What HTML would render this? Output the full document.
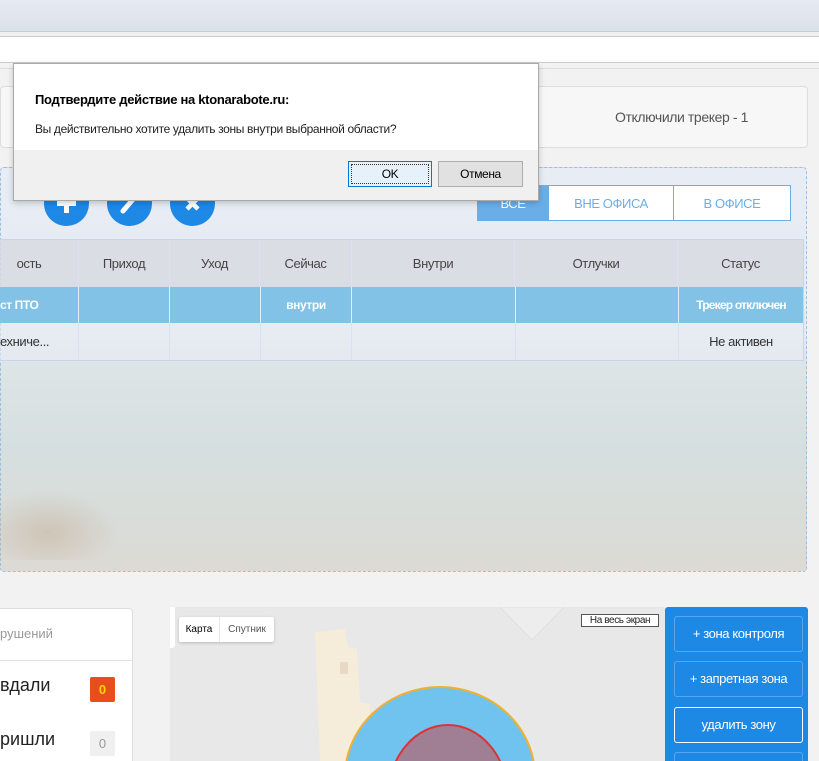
<!DOCTYPE html>
<html style="overflow:hidden;width:819px;height:761px"><head><meta charset="utf-8">
<style>
*{box-sizing:border-box;margin:0;padding:0}
body{width:819px;height:761px;overflow:hidden;position:relative;background:#f2f2f2;font-family:"Liberation Sans","DejaVu Sans",sans-serif;}
.abs{position:absolute}
.n{font-family:"Liberation Sans Narrow","Liberation Sans",sans-serif;letter-spacing:-0.4px}
.th{position:absolute;top:240px;height:47px;line-height:47px;text-align:center;font-size:13px;color:#444;border-right:1px solid #dde0f4}
.r1{position:absolute;top:287px;height:36px;line-height:36px;text-align:center;font-size:12px;color:#fff;font-weight:bold;border-right:1px solid #e3ecf8}
.r2{position:absolute;top:323px;height:37px;line-height:37px;text-align:center;font-size:13px;color:#333;border-right:1px solid #dde0f4}
.circ{position:absolute;top:181px;width:45px;height:45px;border-radius:50%;background:#1e88e5}
.tab{position:absolute;top:185px;height:36px;line-height:36px;text-align:center;font-size:13px;color:#6aaee8;border:1px solid #6aaee8;background:#fff}
.rb{position:absolute;left:674px;width:129px;height:36px;border:1px solid #5aa6ee;border-radius:3px;color:#fff;text-align:center;line-height:34px;font-size:13px}
</style></head><body>
<div class="abs" style="left:0;top:0;width:819px;height:31px;background:linear-gradient(#e6eaf1,#dbe1ea)"></div>
<div class="abs" style="left:0;top:31px;width:819px;height:5px;background:#f0f0f0;border-top:1px solid #c8ccd2"></div>
<div class="abs" style="left:0;top:36px;width:819px;height:27px;background:#fff;border-top:1px solid #ccc;border-bottom:1px solid #ccc"></div>
<div class="abs" style="left:0;top:68px;width:819px;height:1px;background:#ddd"></div>
<div class="abs" style="left:0;top:86px;width:808px;height:62px;background:#f7f7f7;border:1px solid #ddd;border-radius:4px"></div>
<div class="abs n" style="left:555px;top:86px;width:253px;height:62px;line-height:62px;text-align:center;font-size:14px;color:#555">Отключили трекер - 1</div>
<div class="abs" style="left:0;top:167px;width:807px;height:405px;border:1px dashed #9cc0e0;border-radius:4px;background:linear-gradient(180deg,#e8edf5 0%,#e6ebf2 40%,#dce4e6 50%,#d6dfdf 70%,#d9dcd8 90%,#dcdad4 100%)"></div>
<div class="abs" style="left:0;top:490px;width:120px;height:70px;background:radial-gradient(ellipse at 40% 60%,rgba(200,180,160,.6),rgba(220,215,210,0) 70%)"></div>
<div class="circ" style="left:44px"><svg width="45" height="45"><path d="M22.5 13v19M13 22.5h19" stroke="#fff" stroke-width="5"/></svg></div>
<div class="circ" style="left:107px"><svg width="45" height="45"><path d="M16 30l12-14" stroke="#fff" stroke-width="5" stroke-linecap="round"/></svg></div>
<div class="circ" style="left:170px"><svg width="45" height="45"><path d="M17 17l11 11M28 17l-11 11" stroke="#fff" stroke-width="4.5"/></svg></div>
<div class="tab n" style="left:477px;width:72px;background:#6aaee8;color:#fff">ВСЕ</div>
<div class="tab n" style="left:548px;width:126px">ВНЕ ОФИСА</div>
<div class="tab n" style="left:673px;width:118px">В ОФИСЕ</div>
<div class="abs" style="left:0;top:239px;width:804px;height:122px;border:1px solid #c9d4ec;border-left:none"></div>
<div class="abs" style="left:0;top:240px;width:803px;height:47px;background:rgba(215,218,224,.85)"></div>
<div class="abs" style="left:0;top:287px;width:803px;height:36px;background:#82c2e6"></div>
<div class="abs" style="left:0;top:323px;width:803px;height:37px;background:rgba(232,236,244,.6)"></div>
<div class="th n" style="left:-20px;width:99px">ость</div>
<div class="th n" style="left:79px;width:91px">Приход</div>
<div class="th n" style="left:170px;width:90px">Уход</div>
<div class="th n" style="left:260px;width:92px">Сейчас</div>
<div class="th n" style="left:352px;width:163px">Внутри</div>
<div class="th n" style="left:515px;width:163px">Отлучки</div>
<div class="th n" style="left:678px;width:125px;border:none">Статус</div>
<div class="r1 n" style="left:0;width:79px;text-align:left">ст ПТО</div>
<div class="r1" style="left:79px;width:91px"></div>
<div class="r1" style="left:170px;width:91px"></div>
<div class="r1 n" style="left:261px;width:91px">внутри</div>
<div class="r1" style="left:352px;width:164px"></div>
<div class="r1" style="left:516px;width:163px"></div>
<div class="r1 n" style="left:679px;width:124px;border:none;letter-spacing:-0.8px">Трекер отключен</div>
<div class="r2 n" style="left:0;width:79px;text-align:left">ехниче...</div>
<div class="r2" style="left:79px;width:91px"></div>
<div class="r2" style="left:170px;width:91px"></div>
<div class="r2" style="left:261px;width:91px"></div>
<div class="r2" style="left:352px;width:164px"></div>
<div class="r2" style="left:516px;width:163px"></div>
<div class="r2 n" style="left:679px;width:124px;border:none">Не активен</div>
<div class="abs" style="left:0;top:608px;width:133px;height:153px;overflow:hidden">
 <div class="abs" style="left:-5px;top:0;width:138px;height:170px;background:#fff;border:1px solid #ddd;border-radius:4px"></div>
 <div class="abs" style="left:0;top:52px;width:133px;height:1px;background:#e2e2e2"></div>
 <div class="abs" style="left:0;top:18px;font-size:13px;color:#999">рушений</div>
 <div class="abs" style="left:0;top:67px;font-size:18px;color:#222">вдали</div>
 <div class="abs" style="left:90px;top:69px;width:25px;height:25px;background:#e84e1b;border-radius:2px;color:#ffd600;font-weight:bold;font-size:13px;text-align:center;line-height:25px">0</div>
 <div class="abs" style="left:0;top:121px;font-size:18px;color:#222">ришли</div>
 <div class="abs" style="left:90px;top:123px;width:25px;height:25px;background:#f0f0f0;border-radius:2px;color:#999;font-size:13px;text-align:center;line-height:25px">0</div>
</div>
<div class="abs" style="left:170px;top:607px;width:495px;height:154px;background:#e8e8e8;overflow:hidden">
 <svg width="495" height="154" style="position:absolute;left:0;top:0">
  <polygon points="330,0 394,0 362,33" fill="#ededed" stroke="#e0e0e0"/>
  <polygon points="145,25 175,22 178,40 187,42 190,95 200,97 198,154 150,154" fill="#f5ecd9"/>
  <rect x="170" y="55" width="8" height="12" fill="#e8d8c4"/>
  <ellipse cx="270" cy="170" rx="95" ry="90" fill="#6fc3ee" stroke="#f0b030" stroke-width="2"/>
  <ellipse cx="278" cy="190" rx="60" ry="72" fill="#a07f95" stroke="#d33" stroke-width="2"/>
 </svg>
 <div class="abs" style="left:0;top:0;width:5px;height:41px;background:#fff;border-radius:0 0 3px 0"></div>
 <div class="abs" style="left:9px;top:10px;width:95px;height:25px;background:#fff;box-shadow:0 1px 3px rgba(0,0,0,.2);border-radius:2px;font-size:10px;line-height:25px">
  <span style="position:absolute;left:0;width:41px;text-align:center;color:#000;border-right:1px solid #e6e6e6">Карта</span>
  <span style="position:absolute;left:41px;width:54px;text-align:center;color:#555">Спутник</span>
 </div>
 <div class="abs n" style="left:411px;top:7px;width:78px;height:13px;border:1px solid #555;background:#fff;font-size:10px;line-height:11px;text-align:center;color:#222">На весь экран</div>
</div>
<div class="abs" style="left:665px;top:607px;width:143px;height:154px;background:#1e88e5;border-radius:3px 3px 0 0;overflow:hidden">
 <div class="rb n" style="left:9px;top:9px">+ зона контроля</div>
 <div class="rb n" style="left:9px;top:54px">+ запретная зона</div>
 <div class="rb n" style="left:9px;top:100px;border:1px solid #fff">удалить зону</div>
 <div class="rb" style="left:9px;top:145px"></div>
</div>
<div class="abs" style="left:13px;top:63px;width:526px;height:138px;background:#fff;border:1px solid #aaa;box-shadow:0 2px 6px rgba(0,0,0,.2)">
 <div class="abs n" style="left:21px;top:28px;font-size:13px;font-weight:bold;color:#000;letter-spacing:-0.3px">Подтвердите действие на ktonarabote.ru:</div>
 <div class="abs n" style="left:21px;top:58px;font-size:12px;color:#222;letter-spacing:-0.35px">Вы действительно хотите удалить зоны внутри выбранной области?</div>
 <div class="abs" style="left:0;top:86px;width:524px;height:50px;background:#f0f0f0"></div>
 <div class="abs n" style="left:334px;top:97px;width:84px;height:26px;background:#e5f1fb;border:1px solid #0078d7;font-size:12px;text-align:center;line-height:24px;color:#000;outline:1px dotted #333;outline-offset:-4px">OK</div>
 <div class="abs n" style="left:424px;top:97px;width:85px;height:26px;background:#e1e1e1;border:1px solid #adadad;font-size:12px;text-align:center;line-height:24px;color:#000">Отмена</div>
</div>
</body></html>
